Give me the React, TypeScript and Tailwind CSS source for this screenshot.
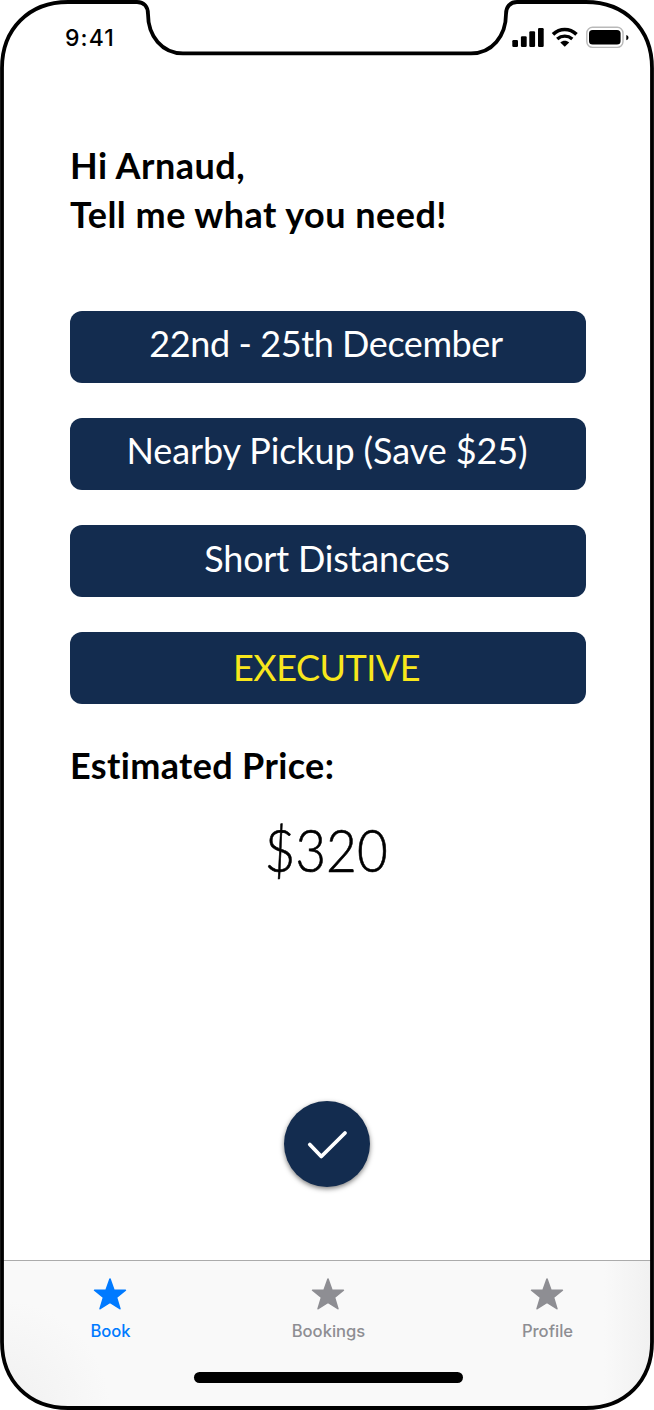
import type { ReactNode } from 'react';

const choices: { label: string; text: string }[] = [
  { label: '22nd - 25th December', text: 'pb-[8px] pr-[4px] text-white tracking-[-0.42px]' },
  { label: 'Nearby Pickup (Save $25)', text: 'pb-[8px] pr-[2px] text-white tracking-[-0.1px]' },
  { label: 'Short Distances', text: 'pb-[6px] pr-[2px] text-white tracking-[-0.2px]' },
  { label: 'EXECUTIVE', text: 'pb-[2px] pr-[3px] text-[#f8e71c] tracking-[-0.5px]' },
];

function Frame() {
  return (
    <svg className="pointer-events-none absolute inset-0" width="654" height="1410" viewBox="0 0 654 1410" fill="none">
      <path d="M0 0H654V1410H0ZM2 68C2 29 29 2 68 2H586C625 2 652 29 652 68V1342C652 1381 625 1408 586 1408H68C29 1408 2 1381 2 1342Z" fill="#fff" fillRule="evenodd" />
      <path
        d="M2 68C2 29 29 2 68 2H137C144 2 148 7 148 14C148 36 162 53.3 183 53.3H471C492 53.3 506 36 506 14C506 7 510 2 517 2H586C625 2 652 29 652 68V1342C652 1381 625 1408 586 1408H68C29 1408 2 1381 2 1342Z"
        stroke="#000"
        strokeWidth="3.8"
      />
    </svg>
  );
}

function StatusIcons() {
  return (
    <svg width="118" height="24" viewBox="0 0 118 24" fill="none">
      <rect x="0.3" y="14" width="5.7" height="7" rx="1.2" fill="#000" />
      <rect x="8.9" y="10.3" width="5.8" height="10.7" rx="1.2" fill="#000" />
      <rect x="17.3" y="5.3" width="5.8" height="15.7" rx="1.2" fill="#000" />
      <rect x="26" y="2" width="5.7" height="19" rx="1.2" fill="#000" />
      <path d="M41 8.3C48 1.9 57.5 1.9 64.5 8.3" stroke="#000" strokeWidth="3.7" />
      <path d="M45.2 13C49.7 9.2 55.8 9.2 60.3 13" stroke="#000" strokeWidth="3.4" />
      <path d="M48.3 16.5C51 14.2 54.5 14.2 57.2 16.5L52.75 20.8Z" fill="#000" />
      <rect x="74.8" y="1.2" width="36.2" height="20.2" rx="5.8" stroke="#b9b9b9" strokeWidth="1.4" />
      <rect x="77" y="4" width="31.6" height="14.6" rx="3.6" fill="#000" />
      <path d="M114.3 9V14.2C117.2 13.4 117.2 9.8 114.3 9Z" fill="#000" />
    </svg>
  );
}

function Star() {
  return (
    <svg width="34" height="32" viewBox="0 0 34 32" fill="currentColor" stroke="currentColor" strokeWidth="1.6" strokeLinejoin="round">
      <path d="M17 1L20.9 12.1L32.4 12.2L23.5 19.4L26.9 30.7L17 24.4L7.1 30.7L10.5 19.4L1.6 12.2L13.1 12.1Z" />
    </svg>
  );
}

function Tab({ label, className }: { label: ReactNode; className: string }) {
  return (
    <div className={`flex flex-col items-center ${className}`}>
      <Star />
      <span className="mt-[9px] ml-[1px] font-['Inter',sans-serif] text-[16.6px] leading-[24px] font-medium">{label}</span>
    </div>
  );
}

export default function App() {
  return (
    <div className="relative flex h-[1410px] w-[654px] flex-col overflow-hidden bg-white font-['Lato',sans-serif] text-black">
      <header className="flex h-[72px] justify-between pt-[26px] pr-[24px] pl-[65px]">
        <span className="font-['Inter',sans-serif] text-[23px] leading-[24px] font-medium tracking-[1.1px]">9:41</span>
        <StatusIcons />
      </header>

      <main className="flex flex-1 flex-col px-[70px] pt-[69px]">
        <h1 className="text-[36px] leading-[49px] font-bold tracking-[0.48px] whitespace-nowrap">
          <span className="block">Hi Arnaud,</span>
          <span className="block">Tell me what you need!</span>
        </h1>
        <div className="mt-[72px] flex flex-col gap-[35px]">
          {choices.map((c) => (
            <button key={c.label} className={`flex h-[72px] w-[516px] items-center justify-center rounded-[12px] bg-[#132c4f] text-[36px] leading-[44px] whitespace-nowrap ${c.text}`}>
              {c.label}
            </button>
          ))}
        </div>
        <h2 className="mt-[37px] text-[36px] leading-[49px] font-bold tracking-[0.35px]">Estimated Price:</h2>
        <p className="mt-[24px] scale-x-[0.9] pr-[2px] text-center text-[59px] leading-[72px] font-light [-webkit-text-stroke:0.6px_black]">$320</p>
        <button className="mt-auto mb-[73px] flex size-[86px] items-center justify-center self-center rounded-full bg-[#132c4f] shadow-[0_2px_5px_rgba(0,0,0,0.5)]">
          <svg width="42" height="32" viewBox="0 0 42 32" fill="none" stroke="#fff" strokeWidth="3.8" strokeLinecap="round" strokeLinejoin="round">
            <path d="M3.8 16.5L15.3 28.5L39 5" />
          </svg>
        </button>
      </main>

      <nav className="flex h-[150px] flex-col items-center border-t border-[#ababab] bg-[#f9f9f9] bg-[radial-gradient(circle_at_0%_100%,#f0f0f0_0px,#f9f9f900_110px),linear-gradient(to_left,#f0f0f0_0px,#f9f9f900_50px)]">
        <div className="flex w-full justify-between pt-[17px] pr-[59px] pl-[62px] text-[#8e8e93]">
          <Tab label="Book" className="w-[96px] text-[#007aff]" />
          <Tab label="Bookings" className="w-[94px] pr-[1px]" />
          <Tab label="Profile" className="w-[96px]" />
        </div>
        <div className="mt-[29px] ml-[3px] h-[11px] w-[269px] rounded-full bg-black" />
      </nav>
      <Frame />
    </div>
  );
}
